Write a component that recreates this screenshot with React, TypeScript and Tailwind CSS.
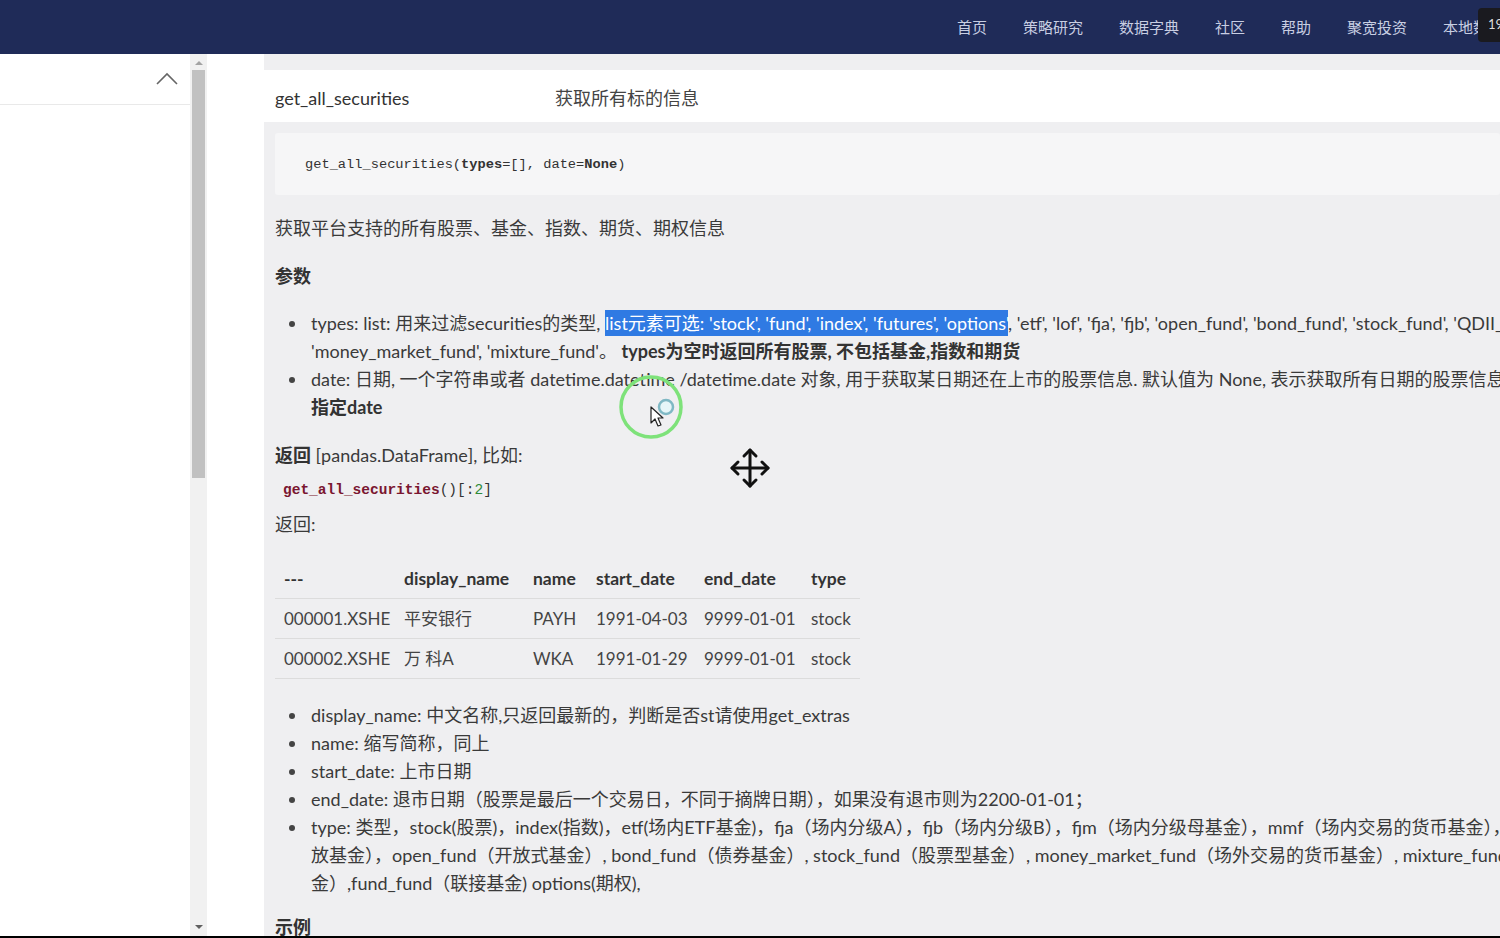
import React from "react";

const NAV = ["首页", "策略研究", "数据字典", "社区", "帮助", "聚宽投资", "本地数据"];

const ROWS = [
  ["000001.XSHE", "平安银行", "PAYH", "1991-04-03", "9999-01-01", "stock"],
  ["000002.XSHE", "万 科A", "WKA", "1991-01-29", "9999-01-01", "stock"],
];

const COLS = "grid grid-cols-[120px_129px_63px_108px_107px_58px]";

function Bullet({ children }: { children: React.ReactNode }) {
  return (
    <li className="relative pl-[36px] leading-[28px]">
      <span className="absolute left-[14px] top-[12px] h-[6px] w-[6px] rounded-full bg-[#444]" />
      {children}
    </li>
  );
}

function Overlays() {
  return (
    <>
      {/* click ripple + cursor */}
      <svg className="absolute left-[618px] top-[374px]" width="70" height="70" viewBox="0 0 70 70">
        <circle cx="33" cy="33" r="30" fill="none" stroke="#7ee27a" strokeWidth="3.5" />
        <circle cx="48" cy="33" r="7" fill="#e6f6f8" stroke="#7fb8c4" strokeWidth="2.5" />
        <path d="M33 33 L33 49 L37 45 L40 52 L43 51 L40 44 L45 44 Z" fill="#fff" stroke="#222" strokeWidth="1.2" strokeLinejoin="round" />
      </svg>
      {/* move cursor */}
      <svg className="absolute left-[728px] top-[446px]" width="44" height="44" viewBox="0 0 44 44">
        <g stroke="#111" strokeWidth="3" fill="none" strokeLinecap="round" strokeLinejoin="round">
          <path d="M22 4 V40 M4 22 H40" />
          <path d="M16 10 L22 4 L28 10" />
          <path d="M16 34 L22 40 L28 34" />
          <path d="M10 16 L4 22 L10 28" />
          <path d="M34 16 L40 22 L34 28" />
        </g>
      </svg>
    </>
  );
}

export default function App() {
  return (
    <div
      className="relative flex h-[938px] w-[1500px] flex-col overflow-hidden bg-white text-[#333]"
      style={{ fontFamily: "Lato, 'Noto Sans CJK SC', sans-serif" }}
    >
      {/* top nav */}
      <header className="relative flex h-[54px] shrink-0 items-center bg-[#1f2b58]">
        <nav className="ml-[957px] flex w-[521px] gap-[36px] overflow-hidden whitespace-nowrap text-[15px] text-[#c8cee2]">
          {NAV.map((n) => (
            <span key={n}>{n}</span>
          ))}
        </nav>
        <div className="absolute right-0 top-[8px] flex h-[34px] w-[22px] items-center overflow-hidden rounded-l-[4px] bg-[#1a1a1f] pl-[10px] text-[13px] text-[#ddd]">
          19
        </div>
      </header>

      <div className="flex min-h-0 flex-1">
        {/* sidebar */}
        <aside className="w-[190px] shrink-0 bg-white">
          <div className="flex h-[51px] items-center justify-end border-b border-[#e9e9e9] pr-[12px]">
            <svg width="22" height="14" viewBox="0 0 22 14">
              <path d="M1 12 L11 2 L21 12" fill="none" stroke="#666" strokeWidth="1.6" />
            </svg>
          </div>
        </aside>

        {/* scrollbar */}
        <div className="flex w-[17px] shrink-0 flex-col items-center bg-[#f1f1f1]">
          <div className="mt-[7px] h-0 w-0 border-x-[4px] border-b-[4px] border-x-transparent border-b-[#a3a3a3]" />
          <div className="mt-[5px] h-[408px] w-[13px] bg-[#c1c1c1]" />
          <div className="mt-auto mb-[7px] h-0 w-0 border-x-[4px] border-t-[4px] border-x-transparent border-t-[#606060]" />
        </div>

        <div className="w-[57px] shrink-0 bg-white" />

        {/* content */}
        <main className="min-w-0 flex-1 overflow-hidden whitespace-nowrap bg-[#efeff1] text-[18px]">
          <div className="h-[16px]" />
          <div className="flex h-[52px] items-center bg-white pl-[11px] pt-[4px] text-[18px]">
            <span className="w-[280px] text-[#333]">get_all_securities</span>
            <span className="text-[#444]">获取所有标的信息</span>
          </div>

          <div className="pl-[11px]">
            <div
              className="mt-[11px] flex h-[62px] items-center rounded-[3px] bg-[#f6f6f7] pl-[30px] pt-[3px] text-[13.7px] text-[#333]"
              style={{ fontFamily: "'Liberation Mono', 'Noto Sans CJK SC', monospace" }}
            >
              get_all_securities(<b>types</b>=[], date=<b>None</b>)
            </div>

            <p className="mt-[19px] leading-[28px] text-[#3a3a3a]">获取平台支持的所有股票、基金、指数、期货、期权信息</p>

            <p className="mt-[20px] font-bold leading-[28px]">参数</p>

            <ul className="mt-[19px] text-[#3a3a3a]">
              <Bullet>
                types: list: 用来过滤securities的类型,{" "}
                <span className="bg-[#2f7ae3] py-[2px] text-white">
                  list元素可选: 'stock', 'fund', 'index', 'futures', 'options'
                </span>
                , 'etf', 'lof', 'fja', 'fjb', 'open_fund', 'bond_fund', 'stock_fund', 'QDII_fund',
                <br />
                'money_market_fund', 'mixture_fund'。{" "}
                <b className="text-[#333]">types为空时返回所有股票, 不包括基金,指数和期货</b>
              </Bullet>
              <Bullet>
                date: 日期, 一个字符串或者 datetime.datetime /datetime.date 对象, 用于获取某日期还在上市的股票信息. 默认值为 None, 表示获取所有日期的股票信息.
                <b className="text-[#333]">建议使用时</b>
                <br />
                <b className="text-[#333]">指定date</b>
              </Bullet>
            </ul>

            <p className="mt-[20px] leading-[28px] text-[#3a3a3a]">
              <b className="text-[#333]">返回</b> [pandas.DataFrame], 比如:
            </p>

            <p
              className="mt-[7px] pl-[8px] text-[14.5px] leading-[28px]"
              style={{ fontFamily: "'Liberation Mono', monospace" }}
            >
              <b className="text-[#7a1630]">get_all_securities</b>
              <span className="text-[#333]">()[:</span>
              <span className="text-[#2e8b3a]">2</span>
              <span className="text-[#333]">]</span>
            </p>

            <p className="mt-[6px] leading-[28px] text-[#3a3a3a]">返回:</p>

            <div className="mt-[22px] w-[585px] text-[17px]">
              <div className={`${COLS} h-[39px] items-center border-b border-[#dcdcdc] text-[17.5px] font-bold text-[#333]`}>
                {["---", "display_name", "name", "start_date", "end_date", "type"].map((h) => (
                  <span key={h} className="pl-[9px]">{h}</span>
                ))}
              </div>
              {ROWS.map((r) => (
                <div key={r[0]} className={`${COLS} h-[40px] items-center border-b border-[#dcdcdc] text-[#444]`}>
                  {r.map((c, i) => (
                    <span key={i} className="pl-[9px]">{c}</span>
                  ))}
                </div>
              ))}
            </div>

            <ul className="mt-[22px] text-[#3a3a3a]">
              <Bullet>display_name: 中文名称,只返回最新的，判断是否st请使用get_extras</Bullet>
              <Bullet>name: 缩写简称，同上</Bullet>
              <Bullet>start_date: 上市日期</Bullet>
              <Bullet>end_date: 退市日期（股票是最后一个交易日，不同于摘牌日期），如果没有退市则为2200-01-01；</Bullet>
              <Bullet>
                type: 类型，stock(股票)，index(指数)，etf(场内ETF基金)，fja（场内分级A），fjb（场内分级B），fjm（场内分级母基金），mmf（场内交易的货币基金），open_fund（开
                <br />
                放基金），open_fund（开放式基金）, bond_fund（债券基金）, stock_fund（股票型基金）, money_market_fund（场外交易的货币基金）, mixture_fund（混合型基
                <br />
                金）,fund_fund（联接基金) options(期权),
              </Bullet>
            </ul>

            <p className="mt-[16px] font-bold leading-[28px]">示例</p>
          </div>
        </main>
      </div>

      <div className="h-[2px] shrink-0 bg-black" />

      <Overlays />
    </div>
  );
}
